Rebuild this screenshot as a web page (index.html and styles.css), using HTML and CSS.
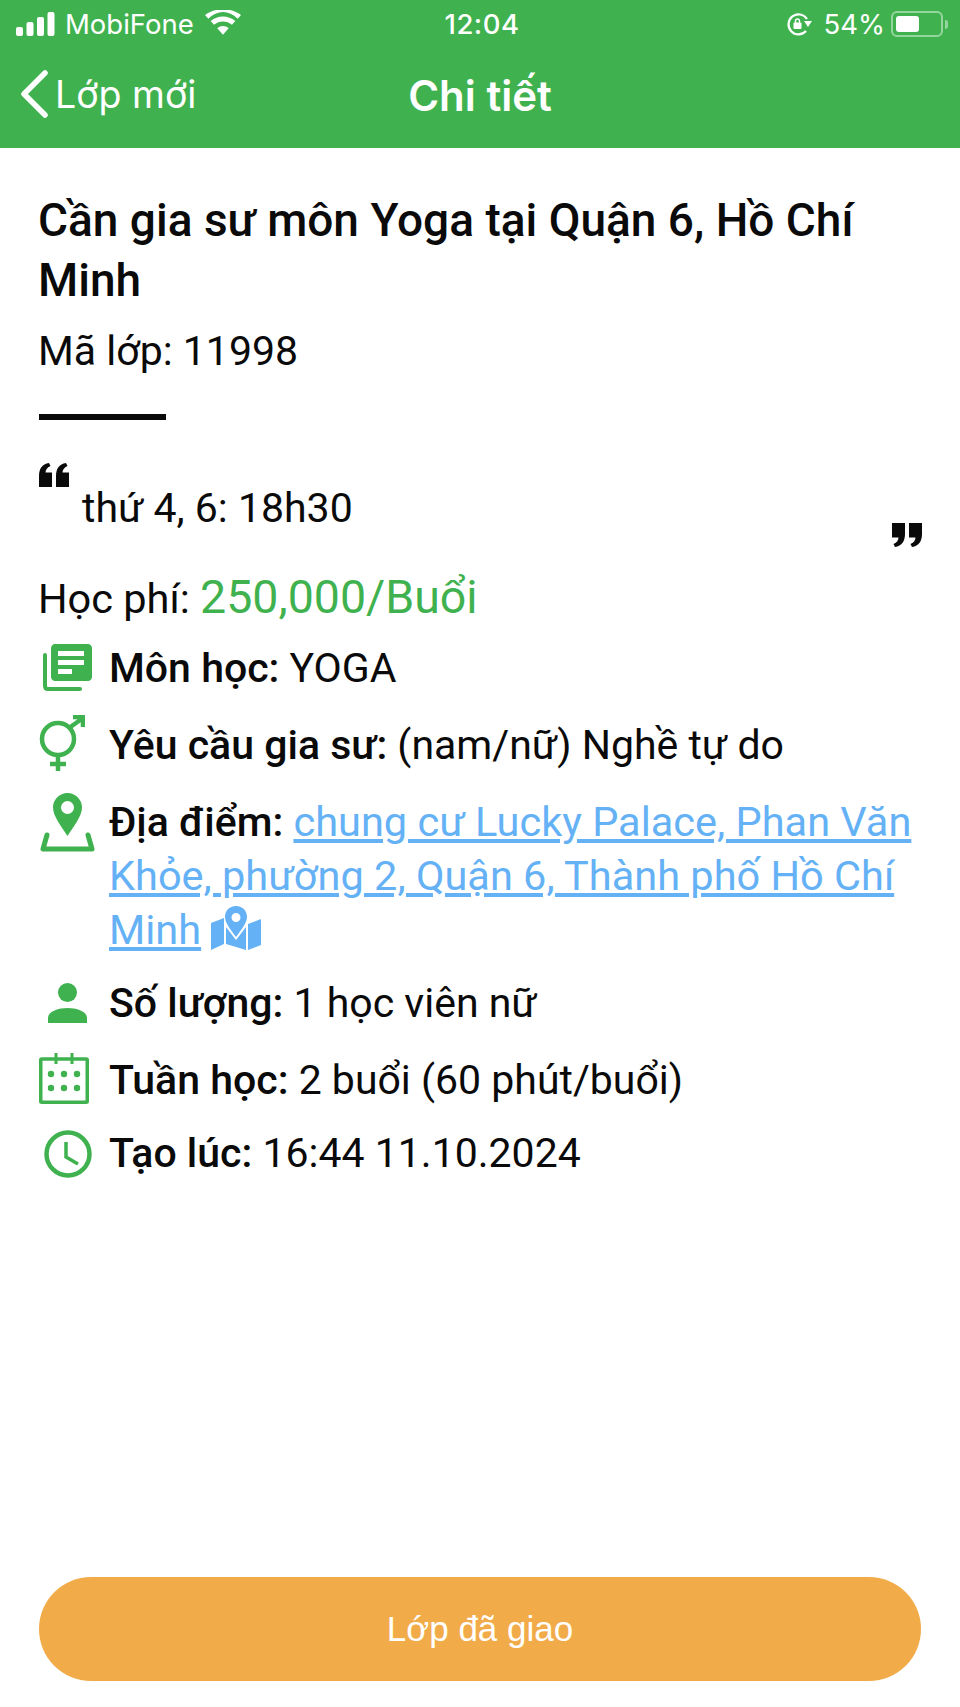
FILE: index.html
```html
<!DOCTYPE html>
<html lang="vi">
<head>
<meta charset="utf-8">
<title>Chi tiết</title>
<link rel="stylesheet" href="styles.css">
</head>
<body>
<div class="page">
  <header class="top">
    <div class="status">
      <div class="status-left">
        <svg class="signal" viewBox="0 0 40 24" width="40" height="24"><rect x="0" y="15" width="7" height="9" rx="2"/><rect x="10.500" y="10" width="7" height="14" rx="2"/><rect x="21" y="5" width="7" height="19" rx="2"/><rect x="31.500" y="0" width="7" height="24" rx="2"/></svg>
        <span>MobiFone</span>
        <svg class="wifi" viewBox="0 0 38 26" width="36" height="25"><path d="M19 26l-6-7c3.500-3 8.500-3 12 0z"/><path d="M9.500 15.500l-3.500-4c7.500-6.500 18.500-6.500 26 0l-3.500 4c-5.500-4.700-13.500-4.700-19 0z"/><path d="M3.500 9L0 5C11-3 27-3 38 5l-3.500 4C25-.5 13-.5 3.500 9z"/></svg>
      </div>
      <div class="clock">12:04</div>
      <div class="status-right">
        <svg class="lock" viewBox="0 0 26 24" width="26" height="24"><path d="M20 19A10 10 0 1 1 21 7" fill="none" stroke="#fff" stroke-width="2.200"/><path d="M18 9h8l-4 6z" fill="#fff"/><rect x="7.500" y="10.500" width="8" height="6.500" rx="1" fill="#fff"/><path d="M9.500 11V9a2 2 0 0 1 4 0v2" fill="none" stroke="#fff" stroke-width="1.400"/></svg>
        <span>54%</span>
        <div class="battery"><div class="battery-fill"></div></div>
        <div class="battery-tip"></div>
      </div>
    </div>
    <div class="nav">
      <div class="back">
        <svg viewBox="0 0 30 48" width="30" height="48"><path d="M26 3L5 24l21 21" fill="none" stroke="#fff" stroke-width="5.500" stroke-linecap="round" stroke-linejoin="round"/></svg>
        <span>Lớp mới</span>
      </div>
      <div class="nav-title">Chi tiết</div>
    </div>
  </header>

  <main class="content">
    <h1 class="title">Cần gia sư môn Yoga tại Quận 6, Hồ Chí Minh</h1>
    <div class="code">Mã lớp: 11998</div>
    <div class="rule"></div>

    <div class="note">
      <svg class="quote" viewBox="0 0 30 24" width="30" height="26"><path d="M0 24V13C0 6 3 1 10 0l1.500 3C8 4.500 6.500 7 6.500 9.500H13V24zM17 24V13c0-7 3-12 10-13l1.500 3C25 4.500 23.500 7 23.500 9.500H30V24z"/></svg>
      <div class="note-text">thứ 4, 6: 18h30</div>
      <svg class="quote quote-end" viewBox="0 0 30 24" width="30" height="26"><path d="M30 0v11c0 7-3 12-10 13l-1.500-3c3.500-1.500 5-4 5-6.500H17V0zM13 0v11c0 7-3 12-10 13l-1.500-3C5 19.500 6.500 17 6.500 14.500H0V0z"/></svg>
    </div>

    <div class="fee">Học phí: <span class="fee-value">250,000/Buổi</span></div>

    <div class="rows">
      <div class="row">
        <div class="slot"><svg class="ico-book" viewBox="0 0 49 47" width="49" height="47"><path d="M2 11v31c0 2 1 3 3 3h32" fill="none" stroke="#3fb24f" stroke-width="4" stroke-linecap="round"/><path fill-rule="evenodd" d="M12 0h33c2 0 4 2 4 4v29c0 2-2 4-4 4H12c-2 0-4-2-4-4V4c0-2 2-4 4-4zM15 7v5h26V7zM15 16v5h26v-5zM15 25v5h14v-5z" fill="#3fb24f"/></svg></div>
        <div class="text"><b>Môn học:</b> YOGA</div>
      </div>
      <div class="row row-wide">
        <div class="slot"><svg class="ico-gender" viewBox="0 0 46 57" width="46" height="57"><circle cx="19" cy="24" r="16" fill="none" stroke="#3fb24f" stroke-width="4.500"/><path d="M30 13L44 3M34 2h10v10M19 40v16M11 49h16" fill="none" stroke="#3fb24f" stroke-width="4.500"/></svg></div>
        <div class="text"><b>Yêu cầu gia sư:</b> (nam/nữ) Nghề tự do</div>
      </div>
      <div class="row row-wide">
        <div class="slot"><svg class="ico-pin" viewBox="0 0 55 59" width="55" height="59"><path fill-rule="evenodd" d="M27.500 0c8 0 14.500 6.500 14.500 14.500C42 23 34 33 27.500 43 21 33 13 23 13 14.500 13 6.500 19.500 0 27.500 0zm0 8a6.500 6.500 0 1 0 0 13 6.500 6.500 0 0 0 0-13z" fill="#3fb24f"/><path d="M7 42L3 56h49l-4-14" fill="none" stroke="#3fb24f" stroke-width="5" stroke-linejoin="round" stroke-linecap="round"/></svg></div>
        <div class="text"><b>Địa điểm:</b> <a class="link">chung cư Lucky Palace, Phan Văn Khỏe, phường 2, Quận 6, Thành phố Hồ Chí Minh</a> <svg class="map" viewBox="0 0 50 44" width="50" height="44"><path fill-rule="evenodd" d="M25 0c7 0 11 5 11 11 0 6-6 13-11 20-5-7-11-14-11-20C14 5 18 0 25 0zm0 7a4.500 4.500 0 1 0 0 9 4.500 4.500 0 0 0 0-9z"/><path d="M0 17l13-5v26L0 44zM15 21l10 13 10-13v23l-20-6zM37 18l13-5v26l-13 5z"/></svg></div>
      </div>
      <div class="row row-narrow">
        <div class="slot"><svg class="ico-person" viewBox="0 0 39 40" width="39" height="40"><circle cx="19.500" cy="9.500" r="9.500" fill="#3fb24f"/><path d="M0 40v-5c0-7 11-10 19.500-10S39 28 39 35v5z" fill="#3fb24f"/></svg></div>
        <div class="text"><b>Số lượng:</b> 1 học viên nữ</div>
      </div>
      <div class="row row-wide">
        <div class="slot"><svg class="ico-cal" viewBox="0 0 50 51" width="50" height="51"><rect x="1.750" y="6" width="46.500" height="43.250" rx="1" fill="none" stroke="#3fb24f" stroke-width="3.500"/><path d="M17 0v11M33 0v11" stroke="#3fb24f" stroke-width="3"/><g fill="#3fb24f"><circle cx="12" cy="21" r="3.200"/><circle cx="25" cy="21" r="3.200"/><circle cx="38" cy="21" r="3.200"/><circle cx="12" cy="35" r="3.200"/><circle cx="25" cy="35" r="3.200"/><circle cx="38" cy="35" r="3.200"/></g></svg></div>
        <div class="text"><b>Tuần học:</b> 2 buổi (60 phút/buổi)</div>
      </div>
      <div class="row row-narrow">
        <div class="slot"><svg class="ico-clock" viewBox="0 0 48 48" width="48" height="48"><circle cx="24" cy="24" r="21.500" fill="none" stroke="#3fb24f" stroke-width="4.500"/><path d="M22 12v15l12 7" fill="none" stroke="#3fb24f" stroke-width="3.500"/></svg></div>
        <div class="text"><b>Tạo lúc:</b> 16:44 11.10.2024</div>
      </div>
    </div>

    <div class="cta">Lớp đã giao</div>
  </main>
</div>
</body>
</html>
```
FILE: styles.css
```css
* { box-sizing: border-box; }
html, body { margin: 0; padding: 0; background: #fff; }
body { font-family: Roboto, "Noto Sans", sans-serif; color: #0a0a0a; }
.page { width: 960px; height: 1707px; display: flex; flex-direction: column; overflow: hidden; }

.top { background: #3fb24f; height: 148px; color: #fff; flex: none; }
.status { height: 46px; padding: 2px 12px 0 16px; display: grid; grid-template-columns: 1fr auto 1fr; align-items: center; font-family: Inter, sans-serif; font-size: 27.500px; }
.status-left { display: flex; align-items: center; gap: 9px; }
.status-left svg { fill: #fff; }
.wifi { margin-left: 2px; margin-top: -4px; }
.clock { letter-spacing: .5px; font-weight: 500; }
.status-right { display: flex; align-items: center; justify-content: flex-end; gap: 6px; }
.lock { margin-right: 6px; }
.battery { width: 52px; height: 26px; border: 2px solid rgba(255,255,255,.45); border-radius: 6px; padding: 3px; }
.battery-fill { width: 23px; height: 16px; background: #fff; border-radius: 3px; }
.battery-tip { width: 3px; height: 9px; background: rgba(255,255,255,.45); margin-left: -4px; border-radius: 0 3px 3px 0; }

.nav { position: relative; height: 102px; display: flex; align-items: center; justify-content: center; padding-bottom: 4px; }
.back { position: absolute; left: 19px; top: 24px; display: flex; align-items: center; gap: 6px; font-family: Inter, sans-serif; font-size: 37.500px; }
.nav-title { font-family: Inter, sans-serif; font-weight: 600; font-size: 42px; }

.content { flex: 1; padding: 0 39px 26px; display: flex; flex-direction: column; }
.title { margin: 42px 0 0 -1px; font-size: 46px; line-height: 60px; font-weight: 500; }
.code { font-size: 41px; line-height: 46px; margin: 18px 0 0 -1px; }
.rule { width: 127px; height: 6px; background: #0a0a0a; margin-top: 40px; }

.note { margin-top: 42px; height: 87px; position: relative; }
.quote { display: block; fill: #0a0a0a; }
.note-text { font-size: 41px; line-height: 46px; padding-left: 43px; margin-top: -3px; }
.quote-end { margin-left: auto; margin-top: -9px; margin-right: -1px; }

.fee { font-size: 41.500px; line-height: 56px; margin: 20px 0 0 -1px; }
.fee-value { color: #3fb24f; font-size: 46.500px; }

.rows { display: flex; flex-direction: column; margin-top: 14px; }
.row { display: flex; align-items: flex-start; }
.slot { flex: none; width: 71px; height: 54px; margin-right: -1px; }
.slot svg { display: block; }
.text { font-size: 41px; line-height: 54px; flex: 1; }
.text b { font-weight: 500; }
.link { color: #64b1f6; text-decoration: underline; font-size: 41.500px; }
.map { fill: #64b1f6; vertical-align: -6px; }
.row-wide { margin-top: 23px; }
.row-narrow { margin-top: 19px; }

.ico-book { margin: 3px 0 0 4px; }
.ico-gender { margin: -3px 0 0 0; }
.ico-pin { margin: -2px 0 0 1px; }
.ico-person { margin: 7px 0 0 9px; }
.ico-cal { margin: 0; }
.ico-clock { margin: 4px 0 0 5px; }

.cta { margin-top: auto; height: 104px; background: #f2ab49; color: #fff; border-radius: 52px; display: flex; align-items: center; justify-content: center; font-family: "Liberation Sans", sans-serif; font-size: 35px; }
```
